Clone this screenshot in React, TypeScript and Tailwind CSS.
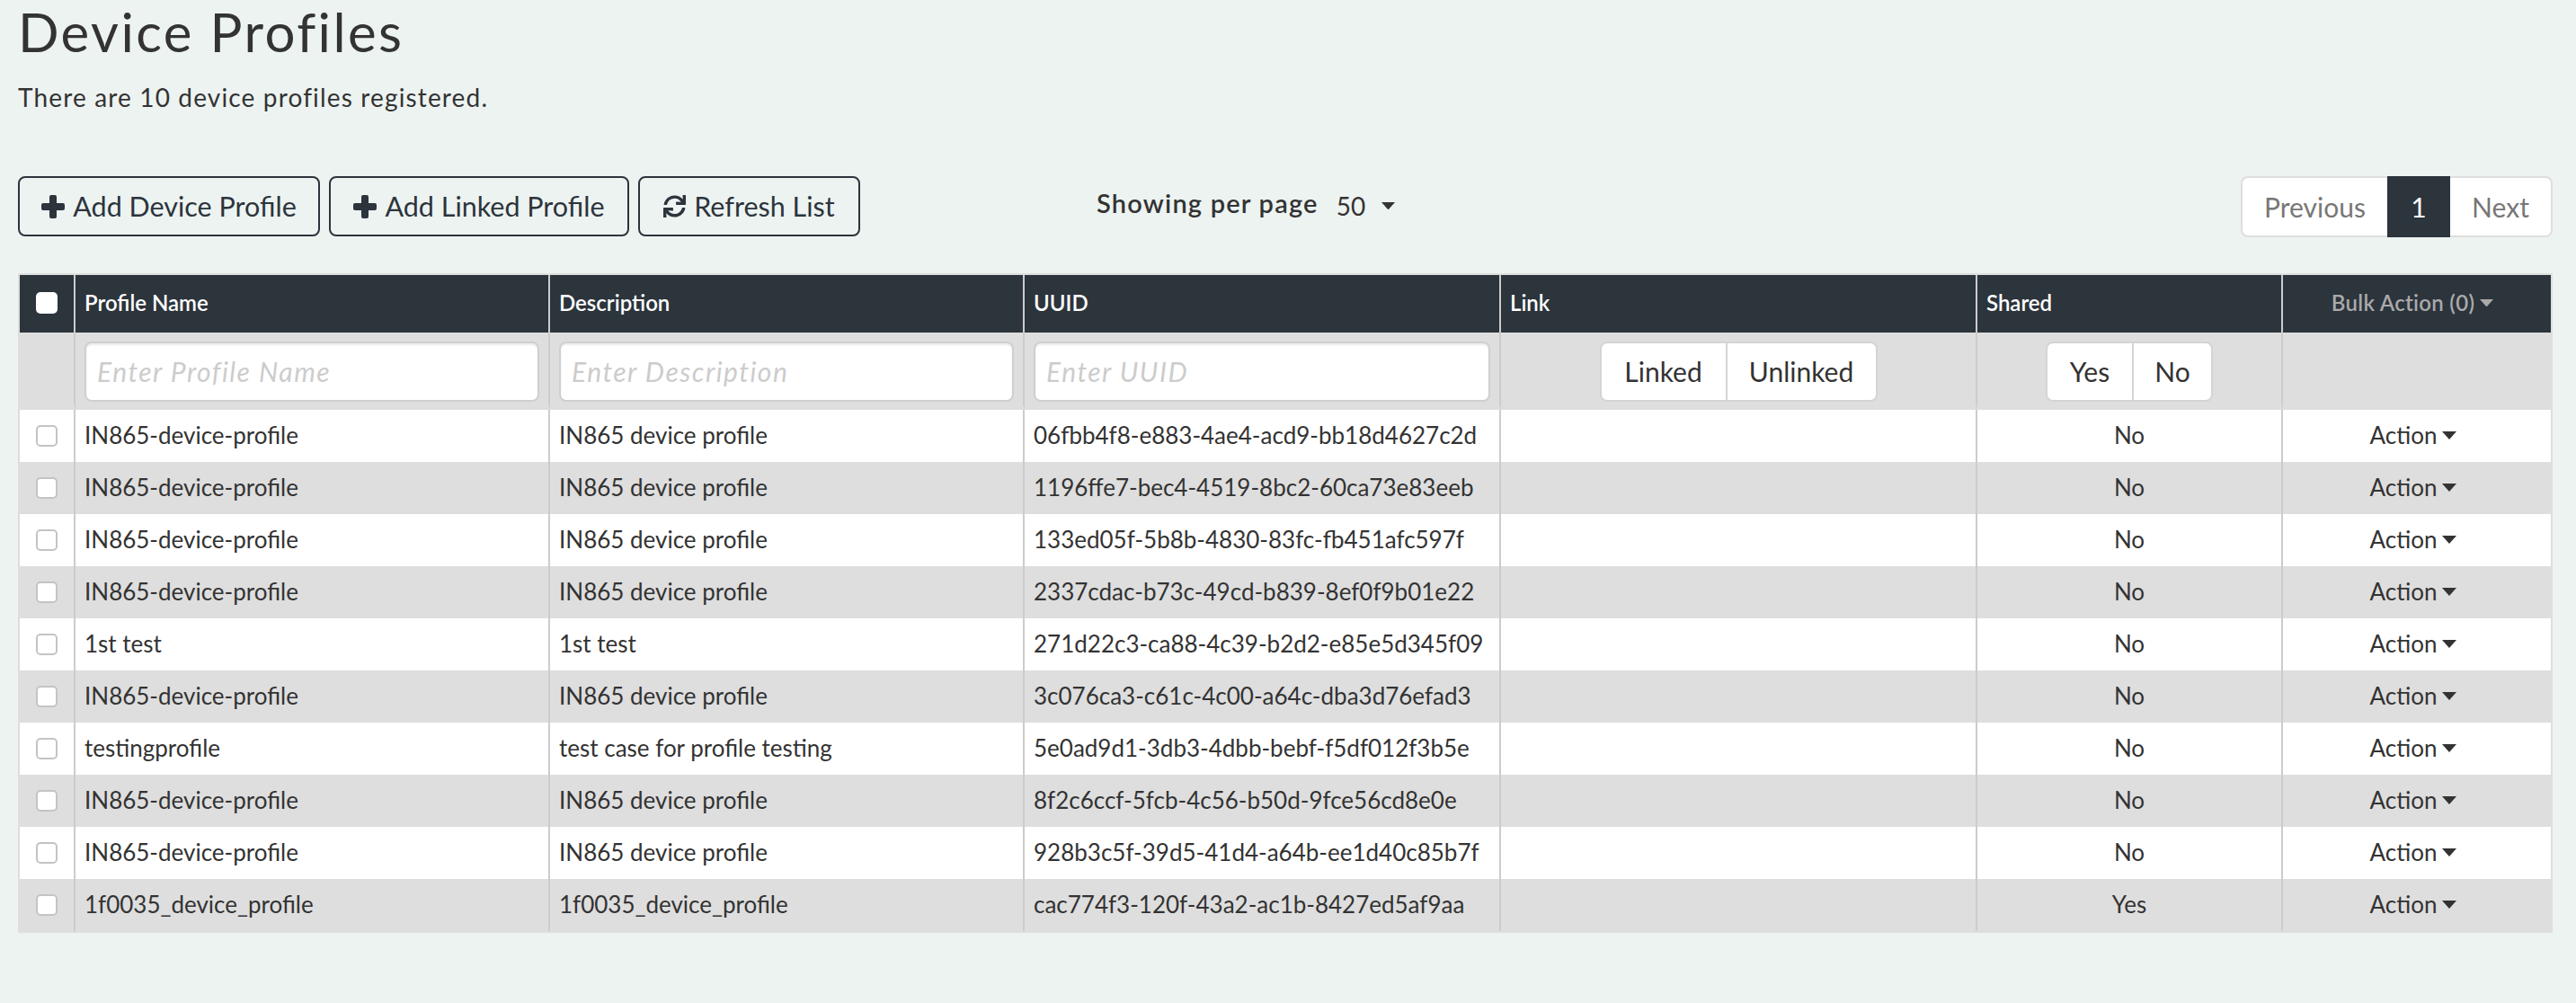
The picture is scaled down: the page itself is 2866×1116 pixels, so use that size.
import { FaSync } from 'react-icons/fa';

const rows = [
  ['IN865-device-profile', 'IN865 device profile', '06fbb4f8-e883-4ae4-acd9-bb18d4627c2d', 'No'],
  ['IN865-device-profile', 'IN865 device profile', '1196ffe7-bec4-4519-8bc2-60ca73e83eeb', 'No'],
  ['IN865-device-profile', 'IN865 device profile', '133ed05f-5b8b-4830-83fc-fb451afc597f', 'No'],
  ['IN865-device-profile', 'IN865 device profile', '2337cdac-b73c-49cd-b839-8ef0f9b01e22', 'No'],
  ['1st test', '1st test', '271d22c3-ca88-4c39-b2d2-e85e5d345f09', 'No'],
  ['IN865-device-profile', 'IN865 device profile', '3c076ca3-c61c-4c00-a64c-dba3d76efad3', 'No'],
  ['testingprofile', 'test case for profile testing', '5e0ad9d1-3db3-4dbb-bebf-f5df012f3b5e', 'No'],
  ['IN865-device-profile', 'IN865 device profile', '8f2c6ccf-5fcb-4c56-b50d-9fce56cd8e0e', 'No'],
  ['IN865-device-profile', 'IN865 device profile', '928b3c5f-39d5-41d4-a64b-ee1d40c85b7f', 'No'],
  ['1f0035_device_profile', '1f0035_device_profile', 'cac774f3-120f-43a2-ac1b-8427ed5af9aa', 'Yes'],
];

function Caret({ className }: { className: string }) {
  return (
    <svg viewBox="0 0 16 9" className={className} fill="currentColor">
      <path d="M0 0h16L8 9z" />
    </svg>
  );
}

function Plus() {
  return (
    <svg viewBox="0 0 26 26" className="h-[26px] w-[26px] shrink-0" fill="currentColor">
      <rect x="9" y="0" width="8" height="26" rx="2" />
      <rect x="0" y="9" width="26" height="8" rx="2" />
    </svg>
  );
}

function ToolButton({ icon, label, width }: { icon: React.ReactNode; label: string; width: string }) {
  return (
    <button className={`flex h-[67px] items-center justify-center gap-[9px] rounded-lg border-2 border-[#2c343c] text-[30.5px] text-[#2c343c] ${width}`}>
      {icon}
      {label}
    </button>
  );
}

function FilterInput({ placeholder }: { placeholder: string }) {
  return (
    <input
      placeholder={placeholder}
      className="h-[67px] w-full rounded-lg border-2 border-[#cfcfcf] bg-white px-[12px] text-[30px] tracking-[1.5px] italic shadow-[inset_0_2px_2px_rgba(0,0,0,0.08)] placeholder:text-[#cccccc]"
    />
  );
}

function Toggle({ options }: { options: [string, string][] }) {
  return (
    <div className="inline-flex h-[67px] rounded-lg border-2 border-[#d4d4d4] bg-white text-[30px] text-[#333333]">
      {options.map(([label, width], i) => (
        <span key={label} className={`flex items-center justify-center ${width} ${i > 0 ? 'border-l-2 border-[#d4d4d4]' : ''}`}>
          {label}
        </span>
      ))}
    </div>
  );
}

const filterCell = 'border-r-2 border-b-[6px] border-r-[#cccccc] border-b-[#dedede] pt-[6px]';

export default function App() {
  return (
    <div className="min-h-screen bg-[#edf3f1] px-5 font-['Lato',sans-serif] text-[#333333]">
      <div className="w-[2820px]">
        <h1 className="h-[70px] text-[60px] leading-[70px] tracking-[2.4px] text-[#333333]">Device Profiles</h1>
        <p className="mt-[18px] h-[40px] text-[28px] leading-[40px] tracking-[1.15px]">There are 10 device profiles registered.</p>

        <div className="mt-[68px] flex h-[68px] items-start">
          <div className="flex w-[1200px] gap-[10px]">
            <ToolButton width="w-[336px]" icon={<Plus />} label="Add Device Profile" />
            <ToolButton width="w-[334px]" icon={<Plus />} label="Add Linked Profile" />
            <ToolButton width="w-[247px]" icon={<FaSync className="h-[25px] w-[25px]" />} label="Refresh List" />
          </div>
          <div className="flex h-[60px] items-center">
            <span className="text-[29px] font-semibold tracking-[1.2px]">Showing per page</span>
            <span className="ml-[20px] mt-[6px] text-[28px]">50</span>
            <Caret className="ml-[18px] mt-[6px] w-[15px]" />
          </div>
          <div className="ml-auto flex h-[68px] bg-transparent text-[30px] text-[#777777]">
            <span className="flex w-[163px] items-center justify-center rounded-l-lg border-2 border-r-0 border-[#dedede] bg-white">Previous</span>
            <span className="flex w-[70px] items-center justify-center bg-[#2c343c] text-white">1</span>
            <span className="flex w-[114px] items-center justify-center rounded-r-lg border-2 border-l-0 border-[#dedede] bg-white">Next</span>
          </div>
        </div>

        <div className="mt-[40px] w-[2820px] border-2 border-[#dedede]">
          <table className="w-full table-fixed border-separate border-spacing-0 text-[26px]">
            <colgroup>
              <col className="w-[62px]" />
              <col className="w-[528px]" />
              <col className="w-[528px]" />
              <col className="w-[530px]" />
              <col className="w-[530px]" />
              <col className="w-[340px]" />
              <col />
            </colgroup>
            <thead>
              <tr className="h-[64px] bg-[#2c343c] text-left text-[24px] font-semibold text-white">
                <th className="border-r-2 border-[#cccccc] pb-[2px] text-center font-semibold">
                  <input type="checkbox" className="mx-auto block h-[24px] w-[24px] appearance-none rounded-[5px] bg-white" />
                </th>
                <th className="border-r-2 border-[#cccccc] px-[10px] pb-[2px] font-semibold">Profile Name</th>
                <th className="border-r-2 border-[#cccccc] px-[10px] pb-[2px] font-semibold">Description</th>
                <th className="border-r-2 border-[#cccccc] px-[10px] pb-[2px] font-semibold">UUID</th>
                <th className="border-r-2 border-[#cccccc] px-[10px] pb-[2px] font-semibold">Link</th>
                <th className="border-r-2 border-[#cccccc] px-[10px] pb-[2px] font-semibold">Shared</th>
                <th className="pb-[2px] pr-[10px] text-center font-semibold tracking-[0.3px] text-[#aaaaaa]">
                  <span className="inline-flex items-center gap-[6px]">
                    Bulk Action (0)
                    <Caret className="w-[15px]" />
                  </span>
                </th>
              </tr>
              <tr className="h-[86px] bg-[#dedede]">
                <td className={filterCell} />
                <td className={`${filterCell} px-[10px]`}>
                  <FilterInput placeholder="Enter Profile Name" />
                </td>
                <td className={`${filterCell} px-[10px]`}>
                  <FilterInput placeholder="Enter Description" />
                </td>
                <td className={`${filterCell} px-[10px]`}>
                  <FilterInput placeholder="Enter UUID" />
                </td>
                <td className={`${filterCell} text-center`}>
                  <Toggle options={[['Linked', 'w-[138px]'], ['Unlinked', 'w-[167px]']]} />
                </td>
                <td className={`${filterCell} text-center`}>
                  <Toggle options={[['Yes', 'w-[94px]'], ['No', 'w-[88px]']]} />
                </td>
                <td className="border-b-[6px] border-b-[#dedede]" />
              </tr>
            </thead>
            <tbody>
              {rows.map((r, i) => (
                <tr key={r[2]} className={`h-[58px] ${i % 2 === 0 ? 'bg-white' : 'bg-[#dedede]'}`}>
                  <td className="border-r-2 border-[#cccccc]">
                    <input type="checkbox" className="mx-auto block h-[24px] w-[24px] appearance-none rounded-[5px] border-2 border-[#c4c4c4] bg-white" />
                  </td>
                  <td className="border-r-2 border-[#cccccc] px-[10px] pb-[2px]">{r[0]}</td>
                  <td className="border-r-2 border-[#cccccc] px-[10px] pb-[2px]">{r[1]}</td>
                  <td className="border-r-2 border-[#cccccc] px-[10px] pb-[2px]">{r[2]}</td>
                  <td className="border-r-2 border-[#cccccc]" />
                  <td className="border-r-2 border-[#cccccc] pb-[2px] text-center">{r[3]}</td>
                  <td className="pb-[2px] pr-[8px] text-center">
                    <span className="inline-flex items-center gap-[6px]">
                      Action
                      <Caret className="w-[16px]" />
                    </span>
                  </td>
                </tr>
              ))}
            </tbody>
          </table>
        </div>
      </div>
    </div>
  );
}
